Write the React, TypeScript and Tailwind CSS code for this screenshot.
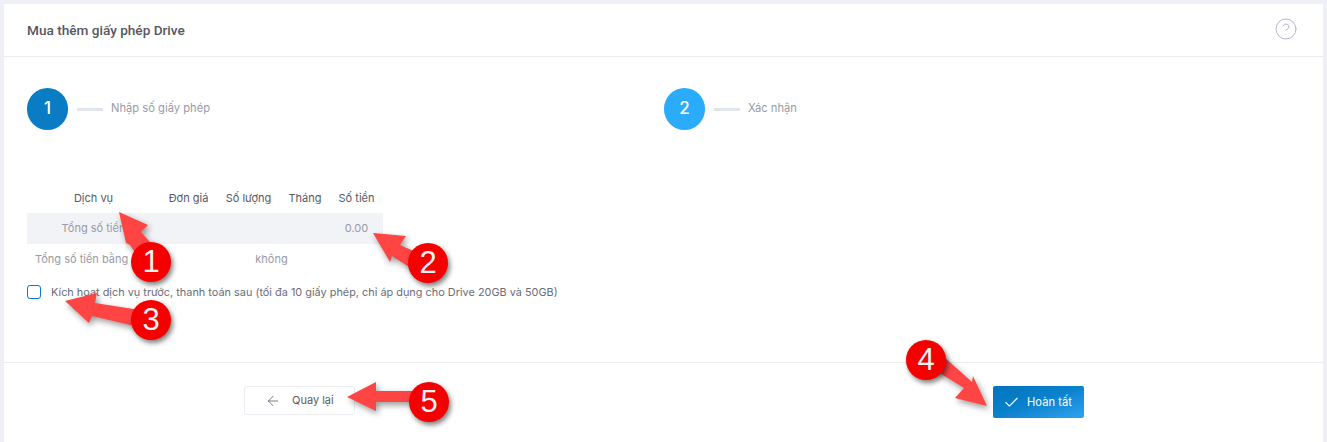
import { ArrowLeft, Check, CircleHelp } from "lucide-react";

const headers = ["Đơn giá", "Số lượng", "Tháng", "Số tiền"];

// red callouts drawn on top of the screenshot
const badges = [
  { n: 1, cls: "left-[131px] top-[242px]" },
  { n: 2, cls: "left-[408px] top-[243px]" },
  { n: 3, cls: "left-[131px] top-[300px]" },
  { n: 4, cls: "left-[906px] top-[340px]" },
  { n: 5, cls: "left-[409px] top-[382px]" },
];

function Callouts() {
  return (
    <>
      <svg
        className="absolute left-0 top-0 drop-shadow-[2px_3px_3px_rgba(0,0,0,0.4)]"
        width="1327"
        height="442"
        fill="#ff4444"
      >
        <path d="M119 212 148 225 141 232 157 250 143 264 130 245 126 243Z" />
        <path d="M373 233 406 236 400 245 425 256 417 272 392 256 390 262Z" />
        <path d="M65 301 97 293 95 303 146 311 143 328 92 316 89 323Z" />
        <path d="M987 406 955 398 964 388 922 362 934 348 972 382 973 376Z" />
        <path d="M347 397 376 382 376 391 425 391 425 402 376 402 376 411Z" />
      </svg>
      {badges.map((b) => (
        <div
          key={b.n}
          className={`absolute ${b.cls} flex h-10 w-10 items-center justify-center rounded-full bg-[#f50000] text-[31px] text-[#f0f0f0] shadow-[2px_3px_5px_rgba(0,0,0,0.5)] font-['Liberation_Sans',sans-serif]`}
        >
          {b.n}
        </div>
      ))}
    </>
  );
}

function Step({ n, label, color }: { n: number; label: string; color: string }) {
  return (
    <div className="flex flex-1 items-center">
      <div
        className={`flex h-[42px] w-[41px] items-center justify-center rounded-full text-[17px] font-medium text-white ${color}`}
      >
        {n}
      </div>
      <div className="ml-[9px] h-[3px] w-[26px] bg-[#e2e4ec]" />
      <span className="ml-[8px] -mt-px text-[11.2px] text-[#9a9ba6]">{label}</span>
    </div>
  );
}

export default function App() {
  return (
    <div className="relative h-[442px] w-[1327px] overflow-hidden bg-[#eef0f6] px-[4px] pt-[4px] font-['Inter',sans-serif]">
      <div className="flex h-[438px] flex-col bg-white">
        {/* tiêu đề */}
        <div className="flex h-[53px] shrink-0 items-center justify-between border-b border-[#ebecf2] pl-[23px] pr-[25px]">
          <h1 className="text-[13.6px] font-medium text-[#555762] font-['Roboto',sans-serif]">
            Mua thêm giấy phép Drive
          </h1>
          <CircleHelp className="-mt-[3px] h-6 w-6 text-[#b5b5d0]" strokeWidth={1} />
        </div>

        {/* nội dung */}
        <div className="h-[306px] shrink-0 border-b border-[#ebecf2] pl-[23px]">
          <div className="flex w-[1274px] pt-[31px]">
            <Step n={1} label="Nhập số giấy phép" color="bg-[#0a7cc4]" />
            <Step n={2} label="Xác nhận" color="bg-[#2bacfb]" />
          </div>

          <div className="mt-[53px] w-[356px] text-[11px]">
            <div className="grid h-[30px] grid-cols-[133px_57px_63px_50px_53px] items-center pt-px text-center text-[#565864]">
              <span>Dịch vụ</span>
              {headers.map((h) => (
                <span key={h}>{h}</span>
              ))}
            </div>
            <div className="grid h-[31px] grid-cols-[133px_170px_53px] items-center bg-[#f2f3f7] text-center text-[#9a9ba6]">
              <span>Tổng số tiền</span>
              <span />
              <span>0.00</span>
            </div>
            <div className="grid h-[30px] grid-cols-[133px_223px] items-center text-[#9a9ba6]">
              <span className="pl-2">Tổng số tiền bằng</span>
              <span className="text-center">không</span>
            </div>
          </div>

          <label className="mt-[10px] flex items-center text-[10.9px] text-[#6b6d78]">
            <span className="h-[14px] w-[14px] rounded-[3px] border border-[#0a7cc4] bg-white" />
            <span className="ml-[10px]">
              Kích hoạt dịch vụ trước, thanh toán sau (tối đa 10 giấy phép, chỉ áp dụng cho Drive 20GB và 50GB)
            </span>
          </label>
        </div>

        {/* nút */}
        <div className="flex items-start pt-[23px] text-[11px]">
          <button className="ml-[240px] flex h-[29px] w-[111px] items-center rounded-[3px] border border-[#ebecf2] bg-white pl-[20px] text-[#5a5c68]">
            <ArrowLeft className="h-[16px] w-[16px]" strokeWidth={1.2} />
            <span className="ml-[11px]">Quay lại</span>
          </button>
          <button className="ml-[638px] flex h-[32px] w-[91px] items-center rounded-[2px] bg-gradient-to-br from-[#0274bb] via-[#0a82cd] via-50% to-[#2ea2f2] pl-[10px] text-white">
            <Check className="h-[17px] w-[17px]" strokeWidth={1.5} />
            <span className="ml-[7px] text-[11.2px]">Hoàn tất</span>
          </button>
        </div>
      </div>
      <Callouts />
    </div>
  );
}
